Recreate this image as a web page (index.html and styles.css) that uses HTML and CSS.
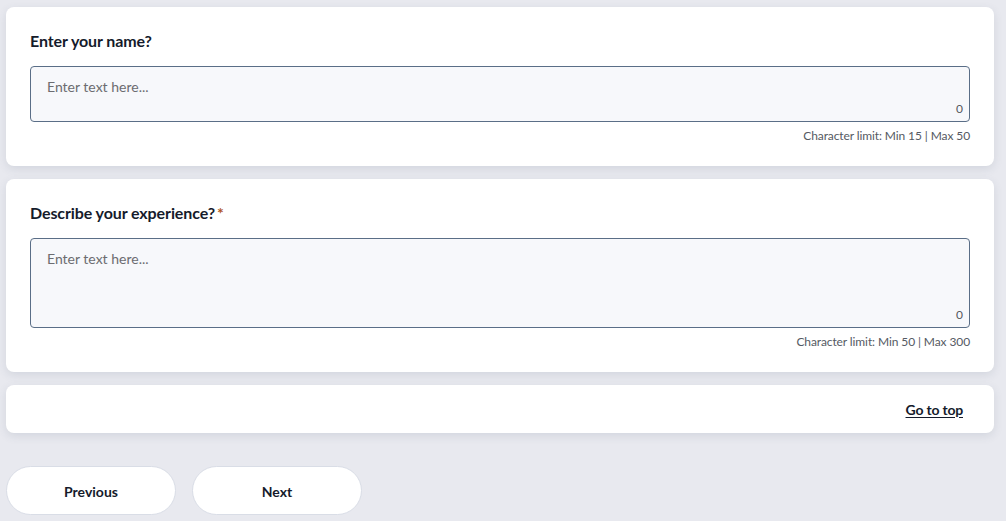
FILE: index.html
```html
<!DOCTYPE html>
<html lang="en">
<head>
<meta charset="utf-8">
<title>Form</title>
<link rel="stylesheet" href="styles.css">
</head>
<body>
<main class="page">
  <section class="card question">
    <label class="q-title" for="q1">Enter your name?</label>
    <div class="field">
      <textarea id="q1" class="input input-short" placeholder="Enter text here..."></textarea>
      <span class="counter">0</span>
    </div>
    <p class="limit">Character limit: Min 15 | Max 50</p>
  </section>
  <section class="card question">
    <label class="q-title" for="q2">Describe your experience?<span class="req">*</span></label>
    <div class="field">
      <textarea id="q2" class="input input-long" placeholder="Enter text here..."></textarea>
      <span class="counter">0</span>
    </div>
    <p class="limit">Character limit: Min 50 | Max 300</p>
  </section>
  <section class="card top-bar">
    <a class="top-link" href="#">Go to top</a>
  </section>
  <nav class="nav">
    <button class="nav-btn">Previous</button>
    <button class="nav-btn">Next</button>
  </nav>
</main>
</body>
</html>
```
FILE: styles.css
```css
* { box-sizing: border-box; }
html, body {
  margin: 0;
  padding: 0;
  background: #e8e9ef;
  font-family: Lato, "Open Sans", sans-serif;
  color: #1b2030;
}
.page {
  padding: 7px 12px 0 6px;
  display: flex;
  flex-direction: column;
}
.card {
  background: #ffffff;
  border-radius: 8px;
  box-shadow: 0 3px 10px rgba(60, 70, 100, 0.12);
}
.question {
  padding: 24px 24px 22px 24px;
  display: flex;
  flex-direction: column;
  margin-bottom: 13px;
}
.q-title {
  font-size: 16px;
  font-weight: 700;
  line-height: 20px;
  color: #151b2b;
  margin-bottom: 15px;
  letter-spacing: -0.1px;
}
.req {
  color: #b0561f;
  margin-left: 2px;
  font-weight: 700;
}
.field {
  position: relative;
}
.input {
  display: block;
  width: 100%;
  background: #f7f8fb;
  border: 1px solid #5a6e87;
  border-radius: 4px;
  padding: 12px 16px;
  font-family: Lato, "Open Sans", sans-serif;
  font-size: 14px;
  line-height: 16px;
  color: #333;
  resize: none;
  outline: none;
}
.input::placeholder {
  color: #6c6c70;
  opacity: 1;
}
.input-short { height: 56px; }
.input-long { height: 90px; }
.counter {
  position: absolute;
  right: 7px;
  bottom: 5px;
  font-size: 12px;
  line-height: 16px;
  color: #55595f;
}
.limit {
  margin: 6px 0 0 0;
  text-align: right;
  font-size: 12px;
  line-height: 16px;
  color: #555a63;
  letter-spacing: -0.1px;
}
.top-bar {
  height: 48px;
  display: flex;
  justify-content: flex-end;
  align-items: center;
  padding: 0 31px 0 24px;
}
.top-link {
  font-size: 14px;
  font-weight: 700;
  color: #151b2b;
  text-decoration: underline;
  text-underline-offset: 2px;
  letter-spacing: -0.2px;
}
.nav {
  display: flex;
  gap: 16px;
  margin-top: 33px;
}
.nav-btn {
  width: 170px;
  height: 49px;
  border-radius: 25px;
  background: #ffffff;
  border: 1px solid #d9dde6;
  font-family: Lato, "Open Sans", sans-serif;
  font-size: 14px;
  font-weight: 700;
  color: #151b2b;
  padding-top: 2px;
  cursor: pointer;
}
```
